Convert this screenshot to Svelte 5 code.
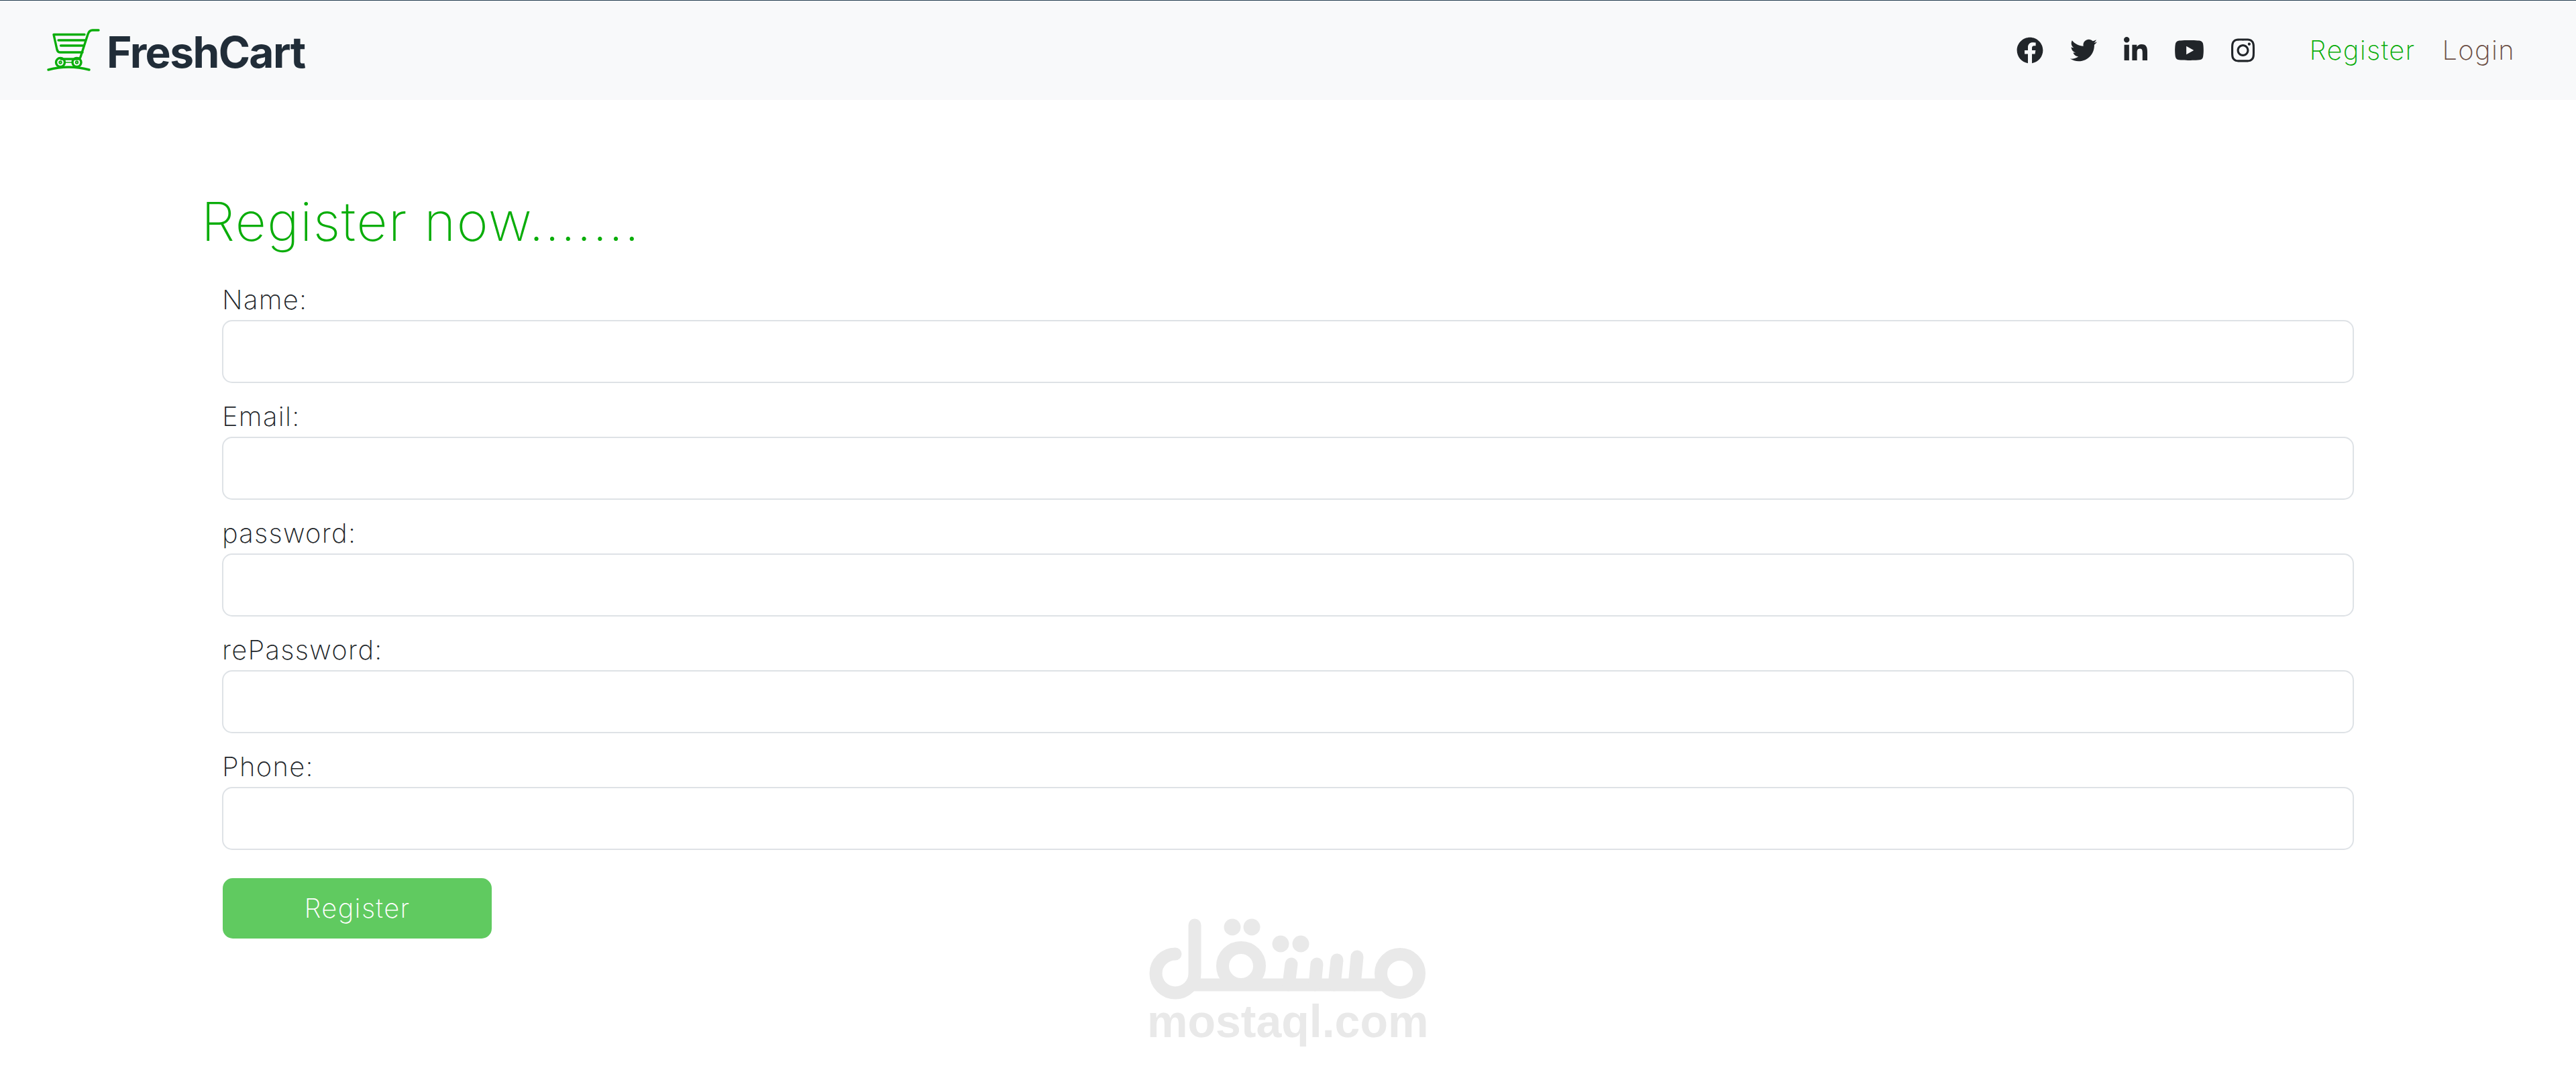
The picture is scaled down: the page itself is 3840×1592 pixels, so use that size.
<script>
    const fields = ["Name:", "Email:", "password:", "rePassword:", "Phone:"];

    const socials = [
        {
            name: "facebook",
            box: "0 0 512 512",
            width: 40,
            d: "M504 256C504 119 393 8 256 8S8 119 8 256c0 123.78 90.69 226.38 209.25 245V327.69h-63V256h63v-54.64c0-62.15 37-96.48 93.67-96.48 27.14 0 55.52 4.84 55.52 4.84v61h-31.28c-30.8 0-40.41 19.12-40.41 38.73V256h68.78l-11 71.69h-57.78V501C413.31 482.38 504 379.78 504 256z",
        },
        {
            name: "twitter",
            box: "0 0 512 512",
            width: 40,
            d: "M459.37 151.716c.325 4.548.325 9.097.325 13.645 0 138.72-105.583 298.558-298.558 298.558-59.452 0-114.68-17.219-161.137-47.106 8.447.974 16.568 1.299 25.34 1.299 49.055 0 94.213-16.568 130.274-44.832-46.132-.975-84.792-31.188-98.112-72.772 6.498.974 12.995 1.624 19.818 1.624 9.421 0 18.843-1.3 27.614-3.573-48.081-9.747-84.143-51.98-84.143-102.985v-1.299c13.969 7.797 30.214 12.67 47.431 13.319-28.264-18.843-46.781-51.005-46.781-87.391 0-19.492 5.197-37.36 14.294-52.954 51.655 63.675 129.3 105.258 216.365 109.807-1.624-7.797-2.599-15.918-2.599-24.04 0-57.828 46.782-104.934 104.934-104.934 30.213 0 57.502 12.67 76.67 33.137 23.715-4.548 46.456-13.32 66.599-25.34-7.798 24.366-24.366 44.833-46.132 57.827 21.117-2.273 41.584-8.122 60.426-16.243-14.292 20.791-32.161 39.308-52.628 54.253z",
        },
        {
            name: "linkedin",
            box: "0 0 448 512",
            width: 35,
            d: "M100.28 448H7.4V148.9h92.88zM53.79 108.1C24.09 108.1 0 83.5 0 53.8a53.79 53.79 0 0 1 107.58 0c0 29.7-24.1 54.3-53.79 54.3zM447.9 448h-92.68V302.4c0-34.7-.7-79.2-48.29-79.2-48.29 0-55.69 37.7-55.69 76.7V448h-92.78V148.9h89.08v40.8h1.3c12.4-23.5 42.69-48.3 87.88-48.3 94 0 111.28 61.9 111.28 142.3V448z",
        },
        {
            name: "youtube",
            box: "0 0 576 512",
            width: 45,
            d: "M549.655 124.083c-6.281-23.65-24.787-42.276-48.284-48.597C458.781 64 288 64 288 64S117.22 64 74.629 75.486c-23.497 6.322-42.003 24.947-48.284 48.597-11.412 42.867-11.412 132.305-11.412 132.305s0 89.438 11.412 132.305c6.281 23.65 24.787 41.5 48.284 47.821C117.22 448 288 448 288 448s170.78 0 213.371-11.486c23.497-6.321 42.003-24.171 48.284-47.821 11.412-42.867 11.412-132.305 11.412-132.305s0-89.438-11.412-132.305zm-317.51 213.508V175.185l142.739 81.205-142.739 81.201z",
        },
        {
            name: "instagram",
            box: "0 0 448 512",
            width: 35,
            d: "M224.1 141c-63.6 0-114.9 51.3-114.9 114.9s51.3 114.9 114.9 114.9S339 319.5 339 255.9 287.7 141 224.1 141zm0 189.6c-41.1 0-74.7-33.5-74.7-74.7s33.5-74.7 74.7-74.7 74.7 33.5 74.7 74.7-33.6 74.7-74.7 74.7zm146.4-194.3c0 14.9-12 26.8-26.8 26.8-14.9 0-26.8-12-26.8-26.8s12-26.8 26.8-26.8 26.8 12 26.8 26.8zm76.1 27.2c-1.7-35.9-9.9-67.7-36.2-93.9-26.2-26.2-58-34.4-93.9-36.2-37-2.1-147.9-2.1-184.9 0-35.8 1.7-67.6 9.9-93.9 36.1s-34.4 58-36.2 93.9c-2.1 37-2.1 147.9 0 184.9 1.7 35.9 9.9 67.7 36.2 93.9s58 34.4 93.9 36.2c37 2.1 147.9 2.1 184.9 0 35.9-1.7 67.7-9.9 93.9-36.2 26.2-26.2 34.4-58 36.2-93.9 2.1-37 2.1-147.8 0-184.8zM398.8 388c-7.8 19.6-22.9 34.7-42.6 42.6-29.5 11.7-99.5 9-132.1 9s-102.7 2.6-132.1-9c-19.6-7.8-34.7-22.9-42.6-42.6-11.7-29.5-9-99.5-9-132.1s-2.6-102.7 9-132.1c7.8-19.6 22.9-34.7 42.6-42.6 29.5-11.7 99.5-9 132.1-9s102.7-2.6 132.1 9c19.6 7.8 34.7 22.9 42.6 42.6 11.7 29.5 9 99.5 9 132.1s2.7 102.7-9 132.1z",
        },
    ];
</script>

<nav class="navbar">
    <a class="brand" href="#top">
        <svg class="cart" viewBox="10 14 80 66" width="80" height="66" fill="none" stroke="#0aad0a" stroke-width="3.4" stroke-linecap="round" stroke-linejoin="round">
            <path d="M87 17H78Q73 17 71 23L60 57Q59 60 56 60H31" />
            <path d="M66 23.5H20L25 46Q26 50 30 50H63" />
            <path d="M27 32H67M30.500 40H65" />
            <circle cx="30" cy="65" r="6.500" />
            <circle cx="54.500" cy="65" r="6.500" />
            <circle cx="30" cy="65" r="1" />
            <circle cx="54.500" cy="65" r="1" />
            <path d="M36.500 65H48" stroke-width="1.500" />
            <path d="M12 76Q42 68 73 76" />
        </svg>
        <span class="brand-text">FreshCart</span>
    </a>

    <ul class="socials">
        {#each socials as icon}
            <li>
                <svg viewBox={icon.box} width={icon.width} height="40" fill="#212529" aria-label={icon.name}>
                    <path d={icon.d} />
                </svg>
            </li>
        {/each}
    </ul>

    <ul class="links">
        <li><a class="active" href="#register">Register</a></li>
        <li><a href="#login">Login</a></li>
    </ul>
</nav>

<main class="page">
    <h1>Register now.......</h1>
    <form>
        {#each fields as field}
            <label>
                {field}
                <input type="text" />
            </label>
        {/each}
        <button type="button">Register</button>
    </form>
</main>

<div class="watermark">
    <svg viewBox="0 0 480 152" width="480" height="152" fill="none" stroke="#e9e9e9" stroke-width="19" stroke-linecap="round">
        <path d="M72 82A29 29 0 1 0 101 111V39" />
        <circle cx="170" cy="100" r="27.500" />
        <circle cx="407" cy="111" r="28.500" />
        <path d="M90 128H390" stroke-linecap="butt" />
        <path d="M245 97L241 128M283 97L280 128M313 91L309 128M343 86L339 128" />
        <g fill="#e9e9e9" stroke="none">
            <circle cx="157" cy="42" r="12.500" />
            <circle cx="186" cy="42" r="12.500" />
            <circle cx="229" cy="67" r="12.500" />
            <circle cx="259" cy="67" r="12.500" />
        </g>
    </svg>
    <span class="watermark-text">mostaql.com</span>
</div>

<style>
    :global(body) {
        background: #fff;
        font-family: Inter, "Noto Sans", sans-serif;
        font-weight: 250;
        font-size: 40px;
        line-height: 1.5;
        letter-spacing: 0.032em;
        color: #212529;
    }

    .navbar {
        display: flex;
        align-items: center;
        height: 148px;
        padding-left: 70px;
        padding-right: 71px;
        background: #f8f9fa;
        border-top: 1px solid #263f50;
    }

    .brand {
        display: flex;
        align-items: center;
        gap: 9px;
        margin-right: auto;
        text-decoration: none;
    }

    .brand-text {
        padding-top: 5px;
        font-family: Inter, "Liberation Sans", sans-serif;
        font-weight: 700;
        font-size: 64px;
        line-height: 1;
        letter-spacing: -1.600px;
        color: #212d38;
    }

    .socials,
    .links {
        display: flex;
        align-items: center;
        list-style: none;
        margin: 0;
        padding: 0;
    }

    .socials li {
        display: flex;
        padding: 0 20px;
    }

    .links {
        margin-left: 42px;
    }

    .links a {
        display: block;
        padding: 0 20px;
        text-decoration: none;
        color: #6b4f45;
    }

    .links a.active {
        color: #0aad0a;
    }

    .page {
        padding: 0 300px;
    }

    h1 {
        margin: 0;
        padding-top: 133px;
        font-size: 80px;
        font-weight: 250;
        line-height: 96px;
        letter-spacing: 0.02em;
        color: #0aad0a;
    }

    form {
        padding: 0 31px;
        margin-top: 39px;
    }

    label {
        display: block;
        margin-bottom: 20px;
    }

    input {
        display: block;
        box-sizing: border-box;
        width: 100%;
        height: 94px;
        border: 2.500px solid #dee2e6;
        border-radius: 15px;
        background: #fff;
    }

    button {
        display: block;
        width: 401px;
        height: 90px;
        margin-top: 42px;
        margin-left: 1px;
        border: none;
        border-radius: 15px;
        background: #60ca60;
        color: #fff;
        font: inherit;
        letter-spacing: inherit;
    }

    .watermark {
        position: absolute;
        left: 1680px;
        top: 1340px;
        width: 480px;
        display: flex;
        flex-direction: column;
    }

    .watermark-text {
        margin-top: -4px;
        margin-left: 30px;
        font-family: "Liberation Sans", Arial, sans-serif;
        font-weight: 700;
        font-size: 68px;
        line-height: 1;
        letter-spacing: 0;
        color: #e9e9e9;
    }
</style>
